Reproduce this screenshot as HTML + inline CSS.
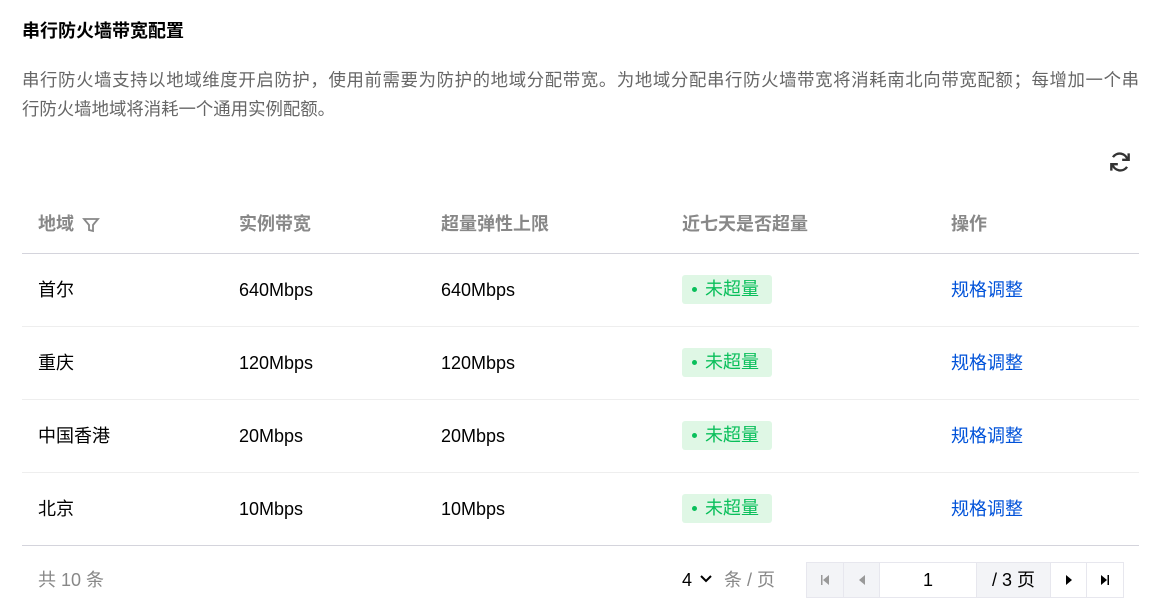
<!DOCTYPE html>
<html><head><meta charset="utf-8"><style>
*{margin:0;padding:0;box-sizing:border-box}
body{width:1161px;height:601px;background:#fff;font-family:"Liberation Sans","Noto Sans CJK SC",sans-serif;color:#000;position:relative;overflow:hidden}
.a{position:absolute}
h1{position:absolute;left:22px;top:19px;font-size:18px;font-weight:bold;line-height:24px}
.desc{position:absolute;left:22px;width:1117px;font-size:17.4px;line-height:29px;color:#666;white-space:nowrap}
.th{position:absolute;top:211px;font-size:18px;font-weight:bold;color:#888;line-height:26px}
.line{position:absolute;left:22px;width:1117px;height:1px;background:#eee}
.td{position:absolute;font-size:18px;line-height:26px;color:#000}
.badge{position:absolute;left:682px;width:90px;height:29px;background:#dff7e5;border-radius:3px;color:#0abf5b;font-size:18px;line-height:29px;padding-left:23px}
.badge:before{content:"";position:absolute;left:10px;top:12px;width:5px;height:5px;border-radius:50%;background:#0abf5b}
.op{position:absolute;left:951px;color:#0052d9;font-size:18px;line-height:26px}
.pg{position:absolute;top:562px;height:36px;border:1px solid #e7e7ee;background:#f3f4f7;font-size:18px;line-height:34px;text-align:center;color:#000}
</style></head><body>
<h1>串行防火墙带宽配置</h1>
<div class="desc" style="top:66px;text-align:justify;text-align-last:justify;white-space:normal">串行防火墙支持以地域维度开启防护，使用前需要为防护的地域分配带宽。为地域分配串行防火墙带宽将消耗南北向带宽配额；每增加一个串</div>
<div class="desc" style="top:95px">行防火墙地域将消耗一个通用实例配额。</div>
<svg class="a" style="left:1107px;top:149px" width="26" height="26" viewBox="0 0 24 24" fill="none" stroke="#333" stroke-width="2.2"><path d="M19 10a7.5 7.5 0 0 0-13.5-2.5"/><path d="M5 14a7.5 7.5 0 0 0 13.5 2.5"/><path d="M20 4v6h-6"/><path d="M4 20v-6h6"/></svg>
<div class="th" style="left:38px">地域</div>
<svg class="a" style="left:82px;top:216px" width="18" height="18" viewBox="0 0 18 18" fill="none" stroke="#888" stroke-width="1.8"><path d="M2 3h14l-5 6v6l-4-1v-5z"/></svg>
<div class="th" style="left:239px">实例带宽</div>
<div class="th" style="left:441px">超量弹性上限</div>
<div class="th" style="left:682px">近七天是否超量</div>
<div class="th" style="left:951px">操作</div>
<div class="line" style="top:253px;background:#d4d4dc"></div>

<div class="td" style="left:38px;top:277px">首尔</div><div class="td" style="left:239px;top:277px">640Mbps</div><div class="td" style="left:441px;top:277px">640Mbps</div><div class="badge" style="top:275px">未超量</div><div class="op" style="top:277px">规格调整</div>
<div class="line" style="top:326px"></div>
<div class="td" style="left:38px;top:350px">重庆</div><div class="td" style="left:239px;top:350px">120Mbps</div><div class="td" style="left:441px;top:350px">120Mbps</div><div class="badge" style="top:348px">未超量</div><div class="op" style="top:350px">规格调整</div>
<div class="line" style="top:399px"></div>
<div class="td" style="left:38px;top:423px">中国香港</div><div class="td" style="left:239px;top:423px">20Mbps</div><div class="td" style="left:441px;top:423px">20Mbps</div><div class="badge" style="top:421px">未超量</div><div class="op" style="top:423px">规格调整</div>
<div class="line" style="top:472px"></div>
<div class="td" style="left:38px;top:496px">北京</div><div class="td" style="left:239px;top:496px">10Mbps</div><div class="td" style="left:441px;top:496px">10Mbps</div><div class="badge" style="top:494px">未超量</div><div class="op" style="top:496px">规格调整</div>
<div class="line" style="top:545px;background:#d4d4dc"></div>

<div class="td" style="left:38px;top:567px;color:#888">共 10 条</div>
<div class="td" style="left:682px;top:567px">4</div>
<svg class="a" style="left:699px;top:573px" width="14" height="12" viewBox="0 0 14 12" fill="none" stroke="#000" stroke-width="2"><path d="M2 3l5 5 5-5"/></svg>
<div class="td" style="left:724px;top:567px;color:#888">条 / 页</div>
<div class="pg" style="left:806px;width:38px"><svg width="12" height="12" viewBox="0 0 12 12" style="margin-top:11px"><path d="M2 1h1.5v10H2z M10 1v10L4 6z" fill="#999"/></svg></div>
<div class="pg" style="left:843px;width:37px"><svg width="12" height="12" viewBox="0 0 12 12" style="margin-top:11px"><path d="M9 1v10L3 6z" fill="#999"/></svg></div>
<div class="pg" style="left:879px;width:98px;background:#fff">1</div>
<div class="pg" style="left:976px;width:75px">/ 3 页</div>
<div class="pg" style="left:1050px;width:37px;background:#fff"><svg width="12" height="12" viewBox="0 0 12 12" style="margin-top:11px"><path d="M3 1v10l6-5z" fill="#000"/></svg></div>
<div class="pg" style="left:1086px;width:38px;background:#fff"><svg width="12" height="12" viewBox="0 0 12 12" style="margin-top:11px"><path d="M2 1v10l6-5z M8.5 1H10v10H8.5z" fill="#000"/></svg></div>
</body></html>
